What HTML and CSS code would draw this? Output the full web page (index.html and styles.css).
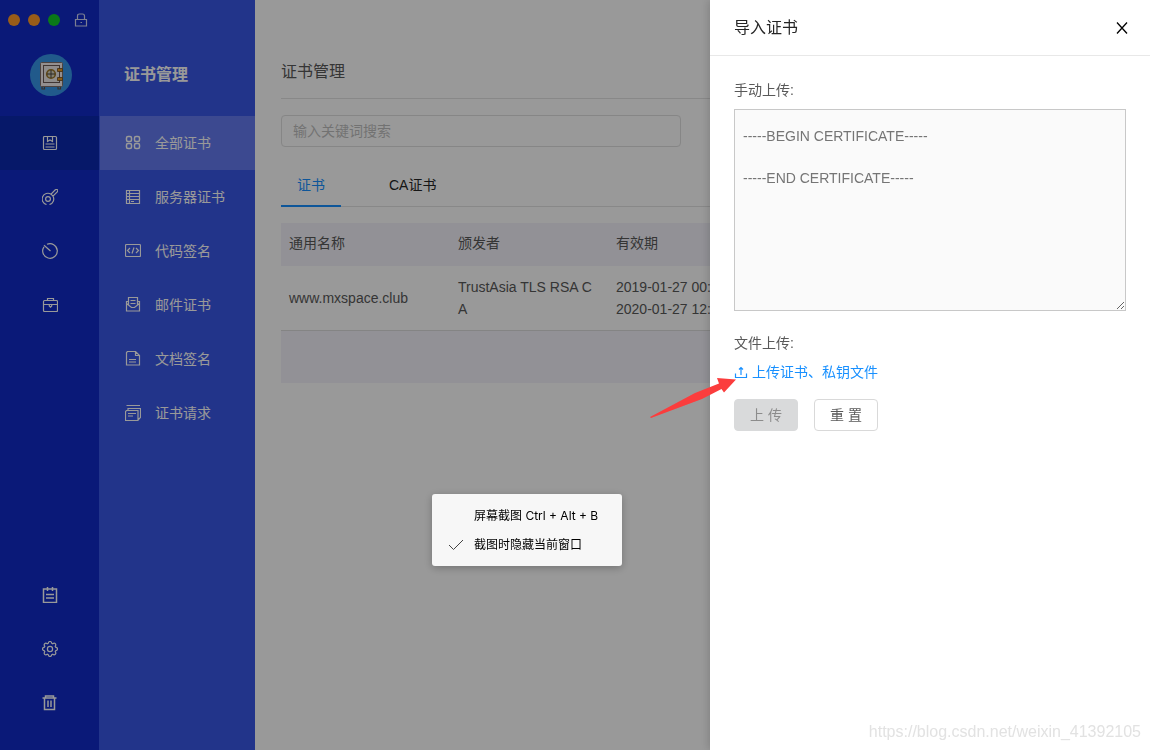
FILE: index.html
```html
<!DOCTYPE html>
<html lang="zh-CN">
<head>
<meta charset="utf-8">
<title>证书管理</title>
<link rel="stylesheet" href="styles.css">
</head>
<body>
<div class="app">
  <nav class="rail" aria-label="主导航">
    <div class="window-bar">
      <span class="dot dot-close"></span>
      <span class="dot dot-min"></span>
      <span class="dot dot-max"></span>
      <svg class="icon lock" viewBox="0 0 14 14"><path d="M1.500 6.500h11v6.500h-11zM3.500 6.500V3Q3.500 1 5.500 1h3Q10.500 1 10.500 3v3.500M6.500 9.500h1.500"/></svg>
    </div>
    <svg class="avatar" viewBox="0 0 42 42">
      <circle cx="21" cy="21" r="21" fill="#3897e8"/>
      <path d="M12 32v3h2.500v-3M28 32v3h2.500v-3" fill="none" stroke="#5c5149" stroke-width="1.200"/>
      <rect x="10.500" y="8.500" width="22" height="24" rx="1" fill="#f5efee" stroke="#80706c"/>
      <rect x="13.500" y="11.500" width="16" height="17" fill="#eeeae8" stroke="#6b5a58"/>
      <circle cx="21" cy="20" r="4.300" fill="#d9d4bb" stroke="#9c7526" stroke-width="1.600"/>
      <path d="M21 16v8M17 20h8" stroke="#4b4540" stroke-width="1"/>
      <path d="M27.500 14.500h5v3h-5zM27.500 23.500h5v3h-5z" fill="#e59a25" stroke="#6b4a20" stroke-width=".8"/>
    </svg>
    <button class="rail-item active" aria-label="证书"><svg class="icon" viewBox="0 0 16 16"><rect x="1.500" y="1.500" width="13" height="13" rx="1"/><path d="M5.500 2v4.500l2.500-1.500 2.500 1.500V2M3.500 9h9M3.500 12h9"/></svg></button>
    <button class="rail-item" aria-label="密钥"><svg class="icon" viewBox="0 0 16 16"><circle cx="6" cy="10" r="2.400"/><path d="M4.500 15.500A5.700 5.700 0 1 1 9 5.200L13.300.8Q14.500 0 15.500.8 16.200 1.600 15.500 2.700L11 7.200A5.700 5.700 0 0 1 7.500 15.500M9 5.200 11 7.200"/></svg></button>
    <button class="rail-item" aria-label="历史"><svg class="icon" viewBox="0 0 16 16"><path d="M5 1.300A7.300 7.300 0 1 1 2 3.800M2 2.200 8.500 8"/></svg></button>
    <button class="rail-item" aria-label="工具箱"><svg class="icon" viewBox="0 0 16 16"><rect x="1.500" y="3.500" width="14" height="11" rx="1"/><path d="M5.500 3.500v-2h6v2M1.500 7.500h14M7.300 7.500v1.500l1.200 1.200 1.200-1.200V7.500"/></svg></button>
    <div class="rail-spacer"></div>
    <button class="rail-item" aria-label="日志"><svg class="icon bold" viewBox="0 0 16 16"><path d="M1.500 2h13v13.500h-13zM5.500 0v4M10.500 0v4M4 7.500h8M4 11h8"/></svg></button>
    <button class="rail-item" aria-label="设置"><svg class="icon" viewBox="0 0 16 16"><circle cx="8" cy="8" r="2.600"/><path d="M6.200 2.400Q6.500.5 8 .5T9.800 2.400L10.700 2.800Q12.300 1.600 13.300 2.700T13.200 5.300L13.600 6.200Q15.500 6.500 15.500 8T13.600 9.800L13.200 10.700Q14.400 12.300 13.300 13.300T10.700 13.200L9.800 13.600Q9.500 15.500 8 15.500T6.200 13.600L5.300 13.200Q3.700 14.400 2.700 13.300T2.800 10.700L2.400 9.800Q.5 9.500 .5 8T2.400 6.200L2.800 5.300Q1.600 3.700 2.700 2.700T5.300 2.800Z"/></svg></button>
    <button class="rail-item" aria-label="回收站"><svg class="icon bold" viewBox="0 0 16 16"><path d="M.5 3h14M3.500 3V1h8v2M2.500 3v11.500h10V3M6 5.500v6.500M9 5.500v6.500"/></svg></button>
  </nav>

  <nav class="subnav" aria-label="证书分类">
    <h2 class="subnav-title">证书管理</h2>
    <a class="subnav-item active" href="#"><svg class="icon bold" viewBox="0 0 16 16"><rect x="1.500" y="1.500" width="5" height="5" rx="1.500"/><rect x="9.500" y="1.500" width="5" height="5" rx="1.500"/><rect x="1.500" y="8.500" width="5" height="5" rx="1.500"/><rect x="9.500" y="8.500" width="5" height="5" rx="1.500"/></svg>全部证书</a>
    <a class="subnav-item" href="#"><svg class="icon" viewBox="0 0 16 16"><path d="M1.500 1.500h13v13h-13zM4.500 1.500v13M1.500 4.500h13M1.500 7.500h13M1.500 10.500h13M6 12.500h3"/></svg>服务器证书</a>
    <a class="subnav-item" href="#"><svg class="icon" viewBox="0 0 16 16"><rect x=".5" y="1.500" width="15" height="12" rx="1"/><path d="M5 5 2.500 7.500 5 10M11 5l2.500 2.500L11 10M9 4.500l-2 6"/></svg>代码签名</a>
    <a class="subnav-item" href="#"><svg class="icon" viewBox="0 0 16 16"><path d="M3.500 4.500h-2v9.500h13V4.500h-2M3.500 8.500V.5h9v8M1.500 6.500l5 4h3l5-4M5.500 3.500h5M5.500 6.500h5"/></svg>邮件证书</a>
    <a class="subnav-item" href="#"><svg class="icon" viewBox="0 0 16 16"><path d="M2.500.5h8l4 4v9.500h-13V1.500zM10.500.5v4h4M4 8.500h7M4 11h7"/></svg>文档签名</a>
    <a class="subnav-item" href="#"><svg class="icon" viewBox="0 0 16 16"><path d="M1.500.5H15M3 5V3.500h12.500v9l-2 2M1.500 5.500h11.500V15.500H.5V6.500zM3 8.500h8M3 11h5"/></svg>证书请求</a>
  </nav>

  <main class="main">
    <h1 class="page-title">证书管理</h1>
    <input class="search" type="text" placeholder="输入关键词搜索" aria-label="搜索">
    <div class="tabs" role="tablist">
      <button class="tab active" role="tab" aria-selected="true">证书</button>
      <button class="tab" role="tab" aria-selected="false">CA证书</button>
    </div>
    <table class="certs">
      <colgroup><col class="col-name"><col class="col-issuer"><col></colgroup>
      <thead><tr><th>通用名称</th><th>颁发者</th><th>有效期</th></tr></thead>
      <tbody><tr><td>www.mxspace.club</td><td class="issuer">TrustAsia TLS RSA CA</td><td>2019-01-27 00:<br>2020-01-27 12:</td></tr></tbody>
      <tfoot><tr><td colspan="3"></td></tr></tfoot>
    </table>
  </main>
</div>

<div class="mask"></div>

<aside class="drawer" role="dialog" aria-labelledby="drawer-title">
  <header class="drawer-header">
    <h2 class="drawer-title" id="drawer-title">导入证书</h2>
    <button class="close" aria-label="关闭"><svg viewBox="0 0 12 12"><path d="M1 .5l10 11M11 .5l-10 11"/></svg></button>
  </header>
  <form class="drawer-body">
    <label class="label" for="pem">手动上传:</label>
    <textarea class="pem" id="pem" placeholder="-----BEGIN CERTIFICATE-----&#10;&#10;-----END CERTIFICATE-----"></textarea>
    <p class="label file-label">文件上传:</p>
    <a class="upload-link" href="#"><svg viewBox="0 0 14 14"><path d="M1.500 8.500v4h11v-4M7 10V2.500M5 4.500l2-2 2 2"/></svg>上传证书、私钥文件</a>
    <div class="actions">
      <button class="btn btn-disabled" type="button" disabled>上 传</button>
      <button class="btn" type="reset">重 置</button>
    </div>
  </form>
  <footer class="watermark">https://blog.csdn.net/weixin_41392105</footer>
</aside>

<svg class="arrow" viewBox="0 0 88 42"><path d="M1 40 46 16 70 6.500 68 1 87 2.500 75 15.500 72.500 12 53 22 2 41Z" fill="#fb3d3d"/></svg>

<div class="menu" role="menu">
  <button class="menu-item" role="menuitem"><span class="menu-check"></span>屏幕截图 Ctrl + Alt + B</button>
  <button class="menu-item" role="menuitemcheckbox" aria-checked="true"><span class="menu-check"><svg viewBox="0 0 16 12"><path d="M1 6l4.500 4.500L15 1"/></svg></span>截图时隐藏当前窗口</button>
</div>
</body>
</html>
```

FILE: styles.css
```css
* { box-sizing: border-box; }

body {
  margin: 0;
  overflow: hidden;
  background: #fff;
  color: #595959;
  font: 14px/22px "Liberation Sans", "Noto Sans CJK SC", sans-serif;
}

h1, h2, p { margin: 0; font-weight: 400; }
button, input, textarea { font: inherit; color: inherit; }
button { padding: 0; border: 0; background: none; }
a { text-decoration: none; }
svg { flex: none; }

.icon {
  width: 16px;
  height: 16px;
  fill: none;
  stroke: currentColor;
  stroke-width: 1.2;
}
.icon.bold { stroke-width: 1.5; }

.app { display: flex; min-height: 100vh; }

/* Left icon rail */
.rail {
  display: flex;
  flex: none;
  flex-direction: column;
  width: 99px;
  padding-bottom: 20px;
  background: #112bc8;
  color: #fff;
}
.window-bar {
  display: flex;
  align-items: center;
  gap: 8px;
  height: 40px;
  padding-left: 8px;
}
.dot { width: 12px; height: 12px; border-radius: 50%; }
.dot-close, .dot-min { background: #ff9a28; }
.dot-max { background: #12ca28; }
.lock { width: 14px; height: 14px; margin-left: 6px; opacity: .8; }
.avatar { width: 42px; height: 42px; margin: 14px 0 20px 30px; }
.rail-item {
  display: flex;
  align-items: center;
  justify-content: center;
  height: 54px;
}
.rail-item.active { background: #0a28b0; }
.rail-spacer { flex: 1; }

/* Category list */
.subnav {
  flex: none;
  width: 156px;
  padding-left: 1px;
  background: #3a57e6;
}
.subnav-title {
  height: 116px;
  padding: 63px 0 0 24px;
  color: #fff;
  font-size: 16px;
  font-weight: 700;
  line-height: 24px;
}
.subnav-item {
  display: flex;
  align-items: center;
  gap: 14px;
  height: 54px;
  padding-left: 25px;
  color: #fff;
  line-height: 24px;
}
.subnav-item.active { background: #647bf0; }

/* Page content */
.main { flex: 1; min-width: 0; padding: 0 26px; }
.page-title {
  height: 99px;
  margin-bottom: 16px;
  padding-top: 60px;
  border-bottom: 1px solid #e3e3e3;
  font-size: 16px;
  line-height: 24px;
}
.search {
  display: block;
  width: 400px;
  height: 32px;
  padding: 0 11px;
  border: 1px solid #e0e0e0;
  border-radius: 4px;
  background: #fff;
}
.search::placeholder { color: #bfbfbf; }
.tabs {
  display: flex;
  gap: 32px;
  height: 44px;
  margin: 16px 0;
  border-bottom: 1px solid #e3e3e3;
}
.tab { height: 44px; padding: 2px 16px 0; border-bottom: 2px solid transparent; color: #262626; }
.tab.active { border-color: #1890ff; color: #1890ff; }

.certs { width: 100%; border-spacing: 0; table-layout: fixed; }
.col-name { width: 169px; }
.col-issuer { width: 158px; }
.certs th, .certs td { padding: 10px 8px; text-align: left; font-weight: 400; }
.certs th, .certs tfoot td { background: #f3f2fa; }
.certs th { height: 43px; padding: 9px 8px 12px; }
.certs tbody td { height: 65px; border-bottom: 1px solid #dcdcdc; }
.certs tfoot td { height: 52px; }
.issuer { word-break: break-all; }

.mask { position: fixed; inset: 0; background: rgba(0, 0, 0, .4); }

/* Import drawer */
.drawer {
  position: fixed;
  inset: 0 0 0 auto;
  display: flex;
  flex-direction: column;
  width: 440px;
  background: #fff;
  box-shadow: -2px 0 8px rgba(0, 0, 0, .15);
}
.drawer-header {
  display: flex;
  align-items: center;
  justify-content: space-between;
  height: 56px;
  padding: 0 16px 0 24px;
  border-bottom: 1px solid #e8e8e8;
}
.drawer-title { color: #262626; font-size: 16px; line-height: 24px; }
.close { display: flex; padding: 6px; }
.close svg { width: 12px; height: 12px; fill: none; stroke: #000; stroke-width: 1.3; }
.drawer-body { flex: 1; padding: 23px 24px; }
.label { display: block; margin-bottom: 8px; }
.pem {
  display: block;
  width: 100%;
  height: 202px;
  padding: 16px 8px;
  border: 1px solid #c8c8c8;
  background: #fafafa;
  line-height: 21px;
  outline: 0;
}
.pem::placeholder { color: #757575; }
.file-label { margin-top: 21px; margin-bottom: 7px; }
.upload-link {
  display: flex;
  align-items: center;
  gap: 4px;
  color: #1890ff;
}
.upload-link svg { width: 14px; height: 14px; fill: none; stroke: currentColor; stroke-width: 1.2; }
.actions { display: flex; gap: 16px; margin-top: 16px; }
.btn {
  width: 64px;
  height: 32px;
  border: 1px solid #d9d9d9;
  border-radius: 4px;
  background: #fff;
}
.btn-disabled { border-color: #d9dadb; background: #d9dadb; color: #8c8c8c; }
.watermark {
  padding: 0 9px 7px;
  color: #e2e2e2;
  font-size: 16px;
  text-align: right;
}

.arrow { position: fixed; top: 377px; right: 413px; width: 88px; height: 42px; }

/* Screenshot menu */
.menu {
  position: fixed;
  top: 494px;
  left: 432px;
  width: 190px;
  padding: 7px 0;
  border-radius: 3px;
  background: #f7f7f7;
  box-shadow: 0 2px 8px rgba(0, 0, 0, .25);
  color: #000;
  font: 12px/18px Inter, "Noto Sans CJK SC", sans-serif;
}
.menu-item { display: flex; align-items: center; width: 100%; height: 29px; }
.menu-check { display: flex; justify-content: center; width: 42px; padding-left: 5px; }
.menu-check svg { width: 16px; height: 12px; fill: none; stroke: #444; }
```
